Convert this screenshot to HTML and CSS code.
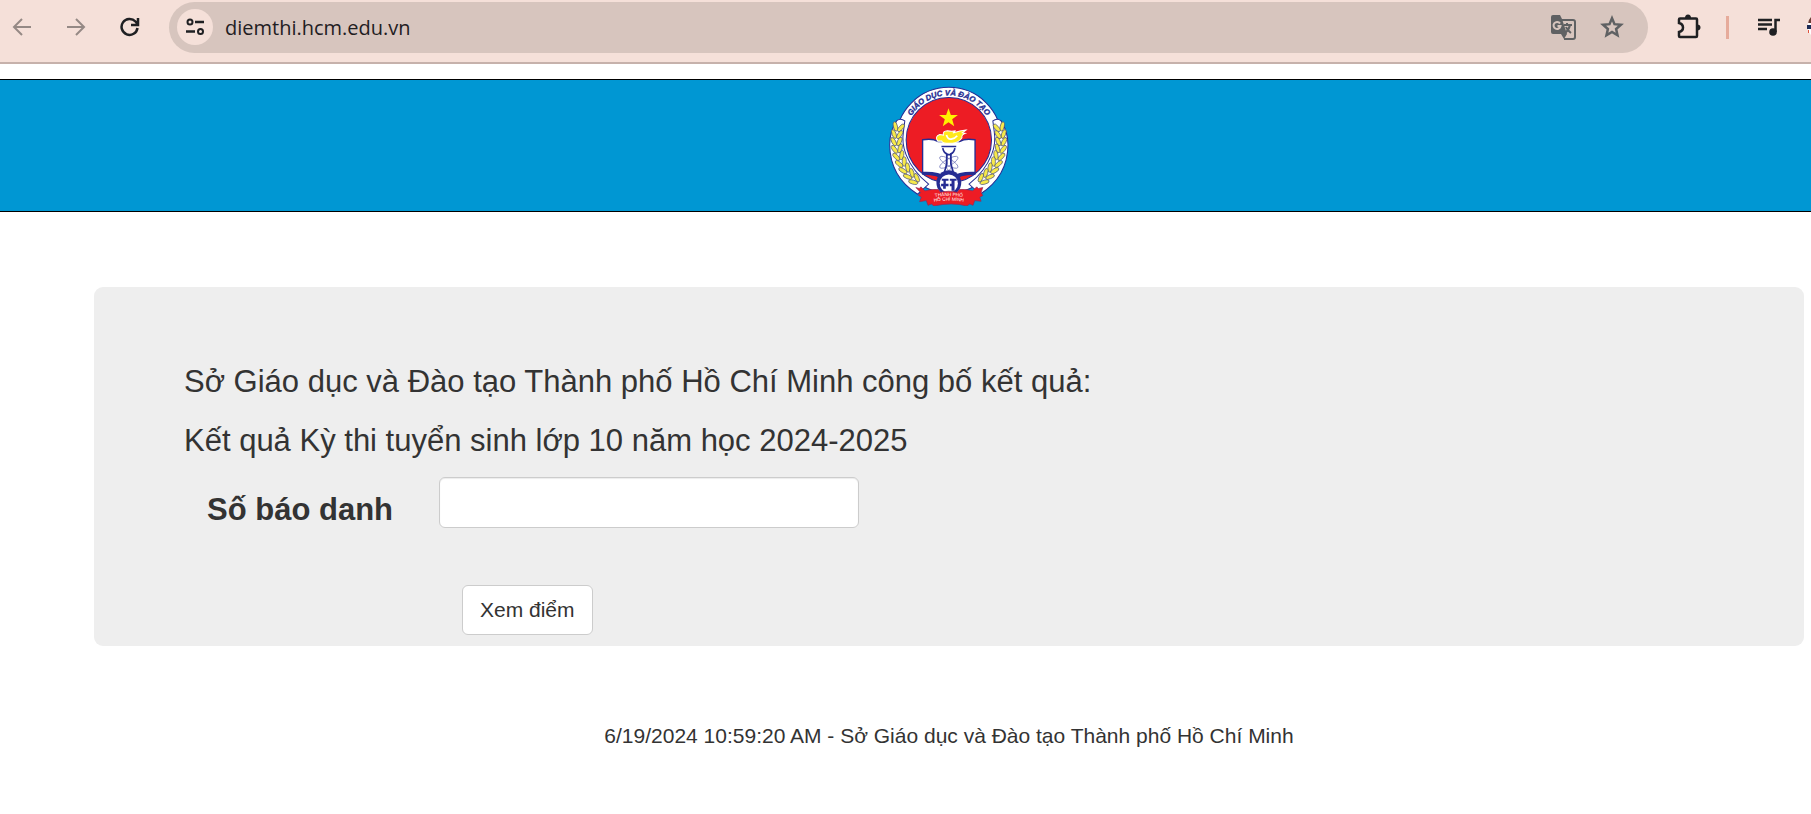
FILE: index.html
```html
<!DOCTYPE html>
<html lang="vi">
<head>
    <meta charset="UTF-8">
    <title>Tra cứu điểm thi</title>
    <link rel="stylesheet" href="styles.css">
</head>
<body>
    <div class="toolbar">
        <button class="tool muted" type="button" aria-label="Back">
            <svg width="20" height="20" viewBox="0 0 20 20"><path d="M19 10H2M10 2L2 10l8 8"/></svg>
        </button>
        <button class="tool muted" type="button" aria-label="Forward">
            <svg width="20" height="20" viewBox="0 0 20 20"><path d="M1 10h17M10 2l8 8-8 8"/></svg>
        </button>
        <button class="tool reload" type="button" aria-label="Reload">
            <svg width="20" height="20" viewBox="0 0 20 20"><path class="thick" d="M17.500 11A8 8 0 1 1 15.500 4.500L17.500 7M18 1v7h-7"/></svg>
        </button>
        <div class="address">
            <button class="site" type="button" aria-label="Site information">
                <svg width="20" height="20" viewBox="0 0 20 20"><path class="thick" d="M10 5h9M1 14.500h9"/><circle cx="5" cy="5" r="2.500"/><circle cx="15.500" cy="14.500" r="2.500"/></svg>
            </button>
            <input class="url" type="text" aria-label="Address" value="diemthi.hcm.edu.vn">
            <button class="tool grey" type="button" aria-label="Translate">
                <svg width="26" height="26" viewBox="0 0 26 26">
                    <path class="fill" d="M3 1h7l2 4 5 15-3 5-3-5H3a2 2 0 0 1-2-2V3a2 2 0 0 1 2-2z"/>
                    <path d="M12 6h11a2 2 0 0 1 2 2v15a2 2 0 0 1-2 2h-9M14 11h8M17 9v2M20 11q-1 5-5 8M16 13q1 3 5 6"/>
                    <path class="cut" d="M10 9.500A3.500 3.500 0 1 0 10.500 12H7.500"/>
                </svg>
            </button>
            <button class="tool grey" type="button" aria-label="Bookmark">
                <svg width="24" height="24" viewBox="0 0 24 24"><path class="thick" d="M12 3.300l2.500 5.900 6.400.6-4.800 4.200 1.400 6.200L12 16.900l-5.500 3.300 1.400-6.200-4.800-4.200 6.400-.6z"/></svg>
            </button>
        </div>
        <button class="tool ext" type="button" aria-label="Extensions">
            <svg width="26" height="26" viewBox="0 0 26 26"><path class="thick" d="M4 4.500h16q1 0 1 1V22q0 1-1 1H4q-1 0-1-1v-4q4-1 4-4.500T3 9V5.500q0-1 1-1z"/><path class="fill" d="M9 4a3 3.500 0 0 1 6 0zM21 10.500a3.500 3 0 0 1 0 6z"/></svg>
        </button>
        <span class="line"></span>
        <button class="tool media" type="button" aria-label="Media">
            <svg width="24" height="20" viewBox="0 0 24 20"><path class="thick" d="M1 3h14M1 7.500h14M1 12h9M18.500 15V3H23"/><circle class="fill" cx="16" cy="15" r="3.800"/></svg>
        </button>
        <svg class="avatar" width="4" height="20" viewBox="0 0 4 20"><path fill="#6b3d35" d="M4 0Q1 3 1 7h3z"/><path fill="#fff" d="M1 6h3v12Q0 14 1 6z"/><path fill="#1d2c56" d="M0 8h4v4H0z"/><path fill="#e0553f" d="M1 13h1v3H1z"/></svg>
    </div>

    <div class="header">
        <svg class="logo" width="120" height="120" viewBox="27 30 357 357">
            <defs>
                <path id="arc" d="M72 191A133 133 0 0 1 338 191"/>
                <path id="arc-top" d="M120 370Q205 344 290 370"/>
                <path id="arc-bottom" d="M120 384Q205 358 290 384"/>
                <g id="grain">
                    <ellipse cx="41" cy="190" rx="6" ry="14" transform="rotate(-26 41 190)"/>
                    <ellipse cx="58" cy="190" rx="6" ry="14" transform="rotate(26 58 190)"/>
                </g>
                <g id="wreath">
                    <path class="edge" d="M50 133Q62 124 74 134L70 165Q64 200 78 235Q98 285 145 322L112 352Q30 300 29 205Q29 165 50 133z"/>
                    <g class="grains">
                        <use href="#grain" transform="rotate(14 205 191)"/>
                        <use href="#grain" transform="rotate(6 205 191)"/>
                        <use href="#grain" transform="rotate(-2 205 191)"/>
                        <use href="#grain" transform="rotate(-10 205 191)"/>
                        <use href="#grain" transform="rotate(-18 205 191)"/>
                        <use href="#grain" transform="rotate(-26 205 191)"/>
                        <use href="#grain" transform="rotate(-34 205 191)"/>
                        <use href="#grain" transform="rotate(-42 205 191)"/>
                        <use href="#grain" transform="rotate(-50 205 191)"/>
                    </g>
                </g>
            </defs>
            <circle class="edge" cx="205" cy="191" r="157"/>
            <use href="#wreath"/>
            <use href="#wreath" transform="translate(410 0) scale(-1 1)"/>
            <circle class="disc" cx="205" cy="191" r="127"/>
            <text class="motto"><textPath href="#arc" startOffset="50%">GIÁO DỤC VÀ ĐÀO TẠO</textPath></text>
            <path class="yellow" d="M204 96l7 20h21l-17 13 6 21-17-12-17 12 6-21-17-13h21z"/>
            <!-- sách -->
            <path class="edge book" d="M127 190q20-3 34 0l12 5h64l12-5q14-3 34 0v101q-50-2-78 20q-28-22-78-20z"/>
            <path class="blue" d="M127 285q48-2 70 14h16q22-16 70-14v9q-48 0-62 18h-32q-14-18-62-18z"/>
            <!-- ngọn lửa -->
            <path class="flame" d="M172 194q-10-14 6-20l11 2q-3-12 12-13q14 3 24 0l-8 7q22-8 39-9l-11 8 9 2q-12 4-10 13q-10 15-28 16h-18q-12 0-14-6z"/>
            <path class="flame-line" d="M198 176q4 14 14 12q12-2 18-10"/>
            <!-- đèn và nguyên tử -->
            <g class="atom">
                <ellipse cx="205" cy="257" rx="31" ry="10" transform="rotate(30 205 257)"/>
                <ellipse cx="205" cy="257" rx="31" ry="10" transform="rotate(-30 205 257)"/>
                <ellipse cx="205" cy="257" rx="9" ry="24"/>
            </g>
            <path class="burner" d="M183 210h44M187 215q2 13 12 17v30l-7 24M223 215q-2 13-12 17v30l7 24M196 234h18"/>
            <!-- bánh răng -->
            <circle class="blue" cx="205" cy="318" r="37"/>
            <circle fill="#fff" cx="205" cy="320" r="27"/>
            <path class="blue" d="M184 306h20v6h-8v9h8v7h-8v8h-8v-8h-6v-7h7v-9h-5zM208 306h20v6h-6v30h-9v-14h-5v-7h5v-9h-5z"/>
            <path class="ribbon" d="M107 332l10 3 5-5 12 12q20-6 40-4l6 8q25-6 50 0l6-8q20-2 40 4l12-12 5 5 13-3-5 15 5 9-9 5 4 12-19-2-5 14-10-4-8 6q-45-12-98 0l-8-6-10 4-5-14-20 3 5-13-9-6 7-8z"/>
            <text class="city"><textPath href="#arc-top" startOffset="50%">THÀNH PHỐ</textPath></text>
            <text class="city"><textPath href="#arc-bottom" startOffset="50%">HỒ CHÍ MINH</textPath></text>
        </svg>
    </div>

    <div class="main">
        <form class="panel">
            <p class="title">Sở Giáo dục và Đào tạo Thành phố Hồ Chí Minh công bố kết quả:</p>
            <p class="title">Kết quả Kỳ thi tuyển sinh lớp 10 năm học 2024-2025</p>
            <div class="row">
                <label for="sbd">Số báo danh</label>
                <input class="sbd" id="sbd" type="text">
            </div>
            <button class="btn" type="button">Xem điểm</button>
        </form>
        <p class="footer">6/19/2024 10:59:20 AM - Sở Giáo dục và Đào tạo Thành phố Hồ Chí Minh</p>
    </div>
</body>
</html>
```
FILE: styles.css
```css
* {
    padding: 0;
    margin: 0;
    box-sizing: border-box;
}
body {
    font-family: "Liberation Sans", Arial, sans-serif;
    color: #333;
    background-color: #fff;
    overflow-x: hidden;
}
button {
    border: 0;
    background: none;
    font-family: inherit;
}
svg {
    display: block;
    fill: none;
    stroke: currentColor;
    stroke-width: 2;
}
svg .thick {
    stroke-width: 2.5;
}
svg .fill {
    fill: currentColor;
    stroke: none;
}
svg .cut {
    stroke: #d7c5be;
}

/* browser bar */
.toolbar {
    display: flex;
    align-items: center;
    height: 64px;
    padding: 0 0 8px 12px;
    background-color: #f5e0d9;
    border-bottom: 2px solid #c6b1ab;
    color: #1f2023;
}
.tool {
    flex: none;
    margin-right: 34px;
    color: #1f2023;
}
.tool.muted {
    color: #958985;
}
.tool.grey {
    margin-right: 24px;
    color: #5f6163;
}
.tool.reload {
    margin-right: 29px;
}
.address {
    flex: 1;
    display: flex;
    align-items: center;
    height: 51px;
    margin-right: 28px;
    padding-left: 8px;
    border-radius: 26px;
    background-color: #d7c5be;
}
.site {
    display: flex;
    align-items: center;
    justify-content: center;
    width: 36px;
    height: 36px;
    border-radius: 50%;
    background-color: #f5e0d9;
    color: #1f2023;
}
.url {
    flex: 1;
    margin-left: 12px;
    border: 0;
    outline: 0;
    background: none;
    font: 20px "Open Sans", sans-serif;
    color: #1f2023;
}
.line {
    width: 3px;
    height: 23px;
    background-color: #e6ab9b;
}
.tool.ext {
    margin-right: 24px;
}
.tool.media {
    margin: 0 26px 0 28px;
}
.avatar {
    stroke: none;
}

/* banner */
.header {
    display: flex;
    justify-content: center;
    height: 133px;
    margin-top: 15px;
    padding: 6px 0 0 87px;
    background-color: #0097d3;
    border-top: 1px solid #000;
    border-bottom: 1px solid #000;
}
.logo {
    stroke: none;
}
.logo .edge {
    fill: #fff;
    stroke: #252c93;
    stroke-width: 3;
}
.logo .book {
    stroke-width: 4;
}
.logo .disc {
    fill: #ed1c24;
    stroke: #252c93;
    stroke-width: 3;
}
.logo .blue {
    fill: #252c93;
}
.logo .yellow {
    fill: #fff200;
}
.logo .grains {
    fill: #f7ea4a;
    stroke: #4a4f78;
    stroke-width: 2;
}
.logo .flame {
    fill: #ffe81c;
    stroke: #fff;
    stroke-width: 3;
}
.logo .flame-line {
    stroke: #fff;
    stroke-width: 5;
}
.logo .atom {
    stroke: #6a6fb5;
    stroke-width: 2;
}
.logo .burner {
    stroke: #252c93;
    stroke-width: 5;
}
.logo .ribbon {
    fill: #ed1c24;
    stroke: #8b2a5c;
    stroke-width: 2;
}
.motto {
    font-size: 23px;
    font-weight: bold;
    font-style: italic;
    text-anchor: middle;
    fill: #252c93;
    stroke: #252c93;
    stroke-width: 1;
}
.city {
    font-size: 14px;
    text-anchor: middle;
    fill: #fff;
}

.main {
    padding: 75px 7px 0 94px;
}
.panel {
    padding: 72px 90px 11px;
    border-radius: 9px;
    background-color: #eee;
}
.title {
    margin-bottom: 13px;
    font-size: 31px;
    line-height: 46px;
}
.row {
    display: flex;
    margin-left: 23px;
}
.row label {
    width: 232px;
    padding-top: 15px;
    font-size: 31px;
    font-weight: bold;
    line-height: 36px;
}
.sbd {
    width: 420px;
    height: 51px;
    padding: 8px 16px;
    border: 1px solid #ccc;
    border-radius: 6px;
    background-color: #fff;
    box-shadow: inset 0 1px 1px rgba(0, 0, 0, .08);
    font-size: 21px;
}
.btn {
    height: 50px;
    margin: 57px 0 0 278px;
    padding: 0 17px;
    border: 1px solid #ccc;
    border-radius: 6px;
    background-color: #fff;
    font-size: 21px;
    color: #333;
}
.footer {
    padding-top: 78px;
    font-size: 21px;
    line-height: 24px;
    text-align: center;
}
```
